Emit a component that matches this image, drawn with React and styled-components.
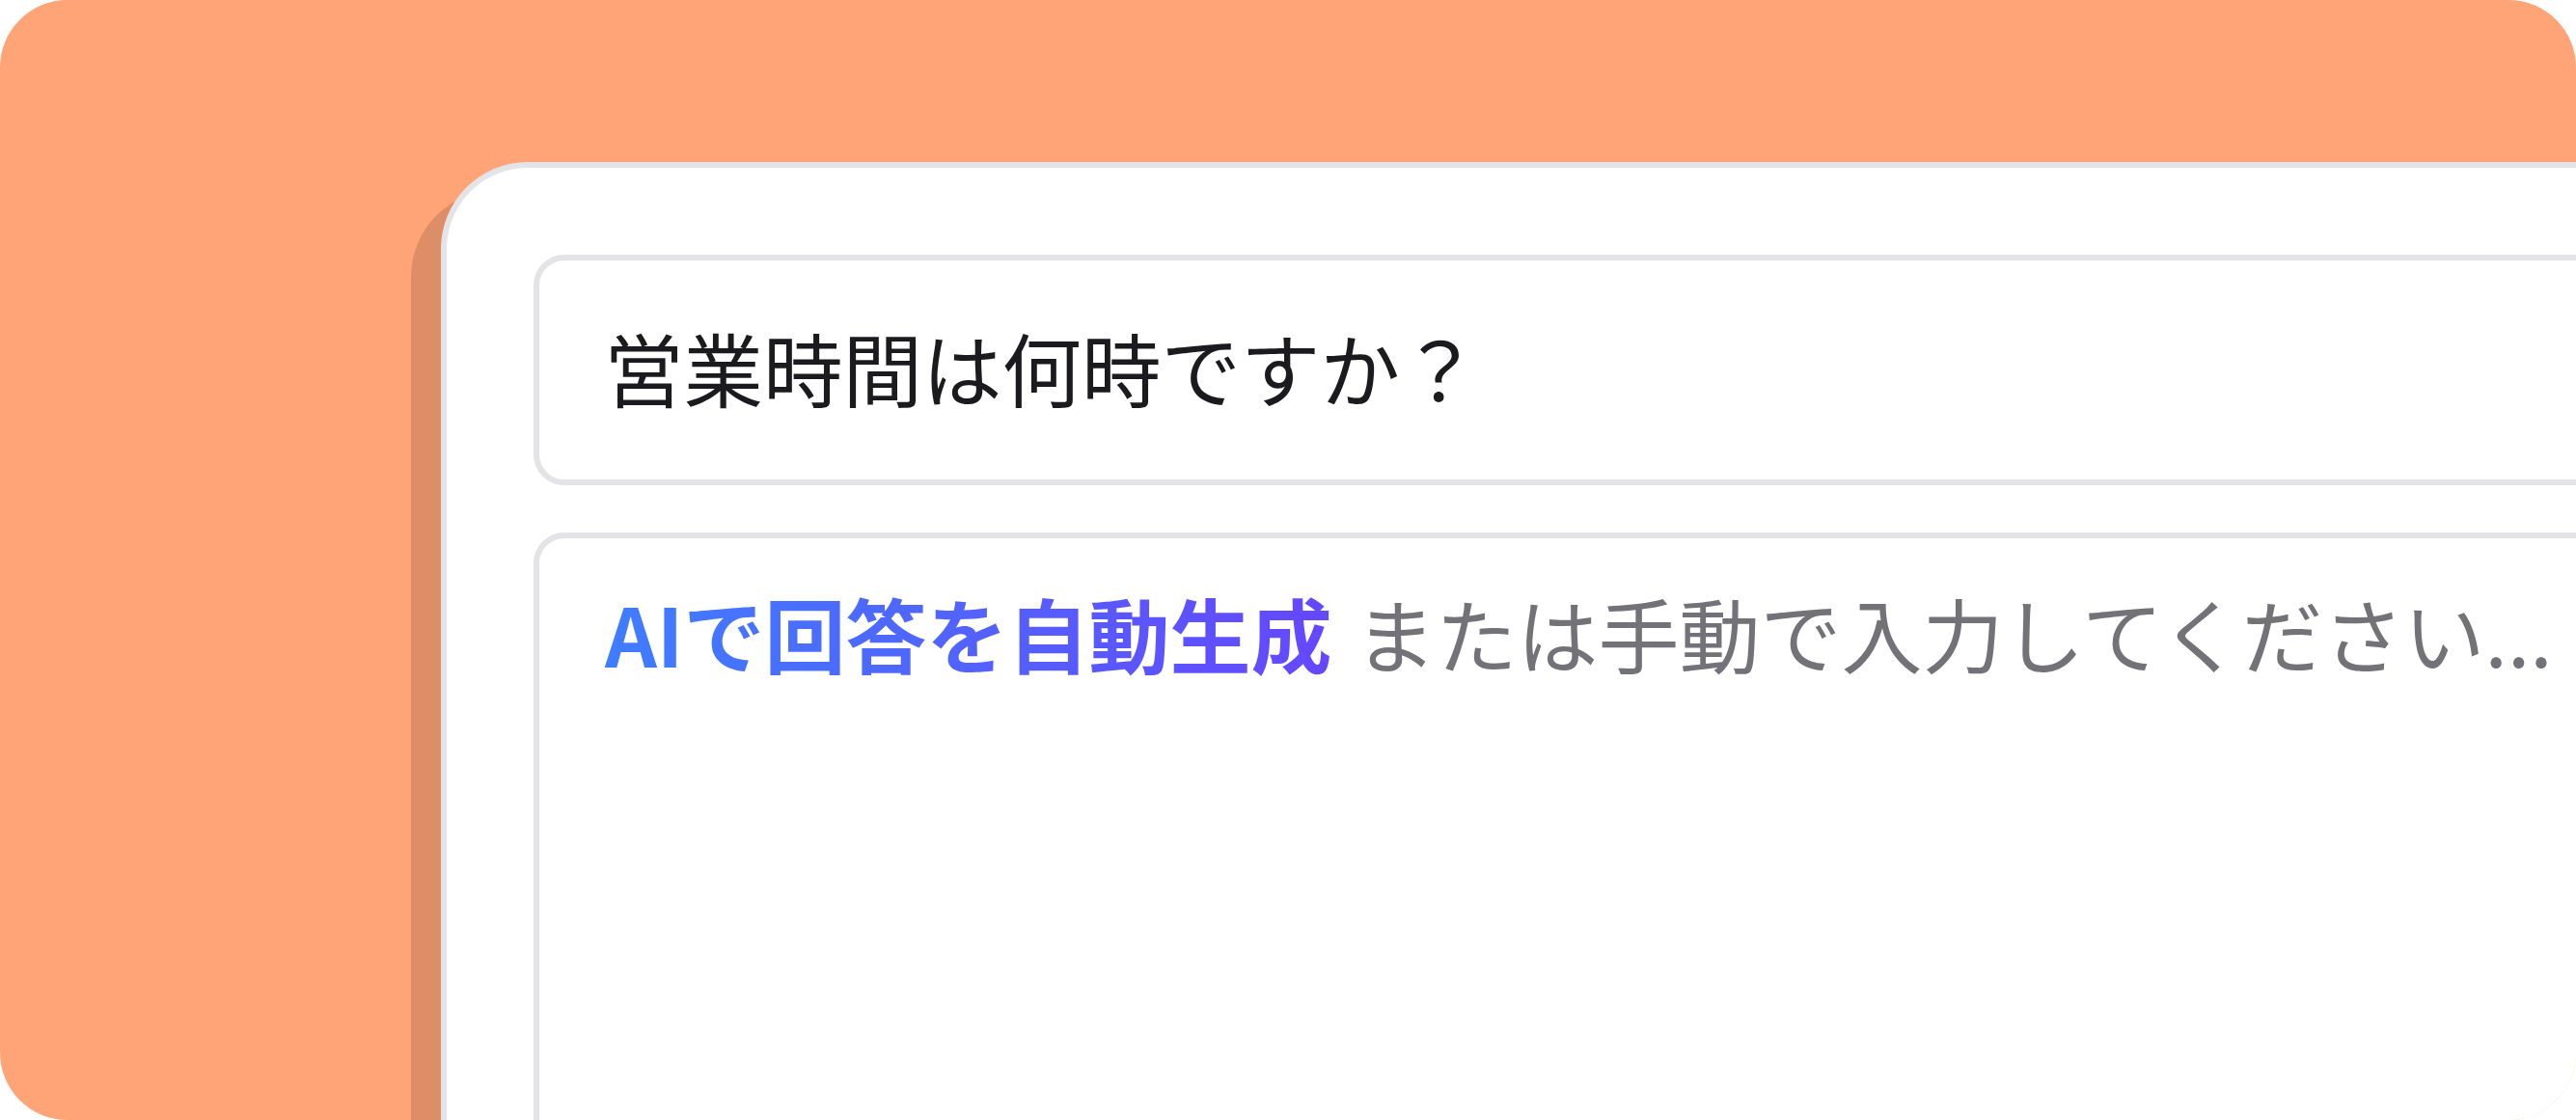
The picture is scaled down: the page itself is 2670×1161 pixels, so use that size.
import React from "react";
import styled, { createGlobalStyle } from "styled-components";

const GlobalStyle = createGlobalStyle`
  html, body {
    margin: 0;
    padding: 0;
    background: #ffffff;
  }
  body {
    font-family: "Noto Sans CJK JP", "Noto Sans", sans-serif;
  }
  * { box-sizing: border-box; }
`;

const Frame = styled.div`
  width: 2670px;
  height: 1161px;
  background: #ffa477;
  border-radius: 70px;
  overflow: hidden;
  display: flex;
  align-items: flex-start;
  padding: 168px 0 0 457px;
`;

const Card = styled.section`
  flex: none;
  width: 2400px;
  height: 1200px;
  background: #ffffff;
  border: 6px solid #e3e3e8;
  border-radius: 90px 0 0 0;
  box-shadow: -31px 29px 0 rgba(0, 0, 0, 0.13);
  padding: 90px;
  display: flex;
  flex-direction: column;
  gap: 49px;
`;

const Field = styled.div`
  border: 6px solid #e3e3e8;
  border-radius: 32px;
  background: #ffffff;
  font-family: "Noto Sans CJK JP", "Noto Sans", sans-serif;
  font-size: ${(p) => (p.$multiline ? "84px" : "82.5px")};
  line-height: 1;
  white-space: nowrap;
  padding: ${(p) => (p.$multiline ? "56px 68px" : "0 67px 6px")};
  height: ${(p) => (p.$multiline ? "700px" : "239px")};
  display: flex;
  align-items: ${(p) => (p.$multiline ? "flex-start" : "center")};
`;

const Question = styled.span`
  color: #1b1b1f;
  font-weight: 400;
`;

const Placeholder = styled.span`
  color: #737278;
  font-weight: 400;
`;

const Highlight = styled.span`
  font-weight: 700;
  background: linear-gradient(90deg, #3f7dff 0%, #6547ff 100%);
  -webkit-background-clip: text;
  background-clip: text;
  color: transparent;
  margin-right: 24px;
`;

export default function App() {
  return (
    <>
      <GlobalStyle />
      <Frame>
        <Card>
          <Field>
            <Question>営業時間は何時ですか？</Question>
          </Field>
          <Field $multiline>
            <span>
              <Highlight>AIで回答を自動生成</Highlight>
              <Placeholder>または手動で入力してください...</Placeholder>
            </span>
          </Field>
        </Card>
      </Frame>
    </>
  );
}
